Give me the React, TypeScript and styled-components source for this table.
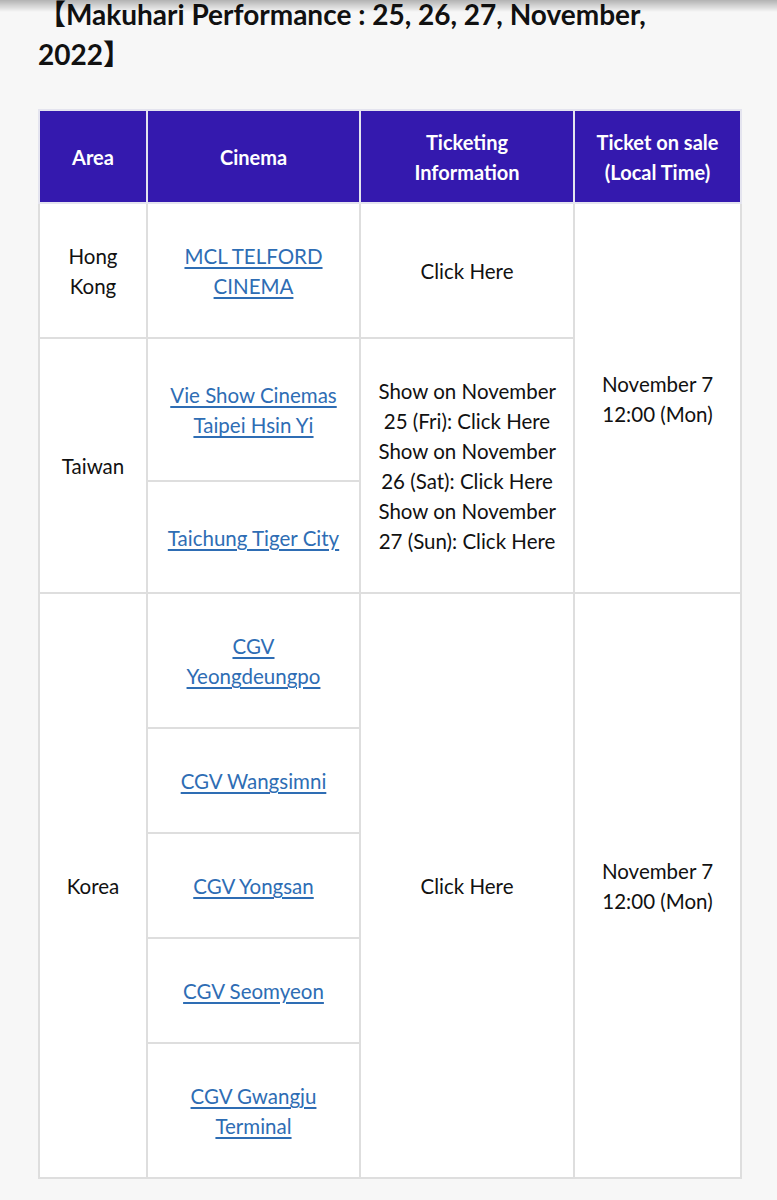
import styled, { createGlobalStyle } from "styled-components";

const GlobalStyle = createGlobalStyle`
  html, body {
    margin: 0;
    padding: 0;
    background: #f7f7f7;
  }
  body {
    font-family: Lato, "Noto Sans CJK JP", sans-serif;
    color: #111;
  }
`;

const TopShade = styled.div`
  position: fixed;
  top: 0;
  left: 0;
  right: 0;
  height: 12px;
  background: linear-gradient(to bottom, rgba(0, 0, 0, 0.28), rgba(0, 0, 0, 0));
  pointer-events: none;
`;

const Page = styled.div`
  padding: 0 37px 20px 38px;
`;

const Heading = styled.h2`
  max-width: 650px;
  margin: -6px 0 35px;
  font-size: 28px;
  font-weight: 700;
  line-height: 40px;
  color: #111;
`;

const Table = styled.table`
  width: 100%;
  border-collapse: collapse;
  table-layout: fixed;
  background: #fff;
  border: 2px solid #dedede;
`;

const Th = styled.th`
  background: #3419ae;
  color: #fff;
  font-weight: 700;
  font-size: 20px;
  line-height: 30px;
  padding: 16px 12px 15px;
  border: 2px solid #e4e4ef;
  text-align: center;
  vertical-align: middle;
`;

const Td = styled.td`
  font-size: 20.5px;
  line-height: 30px;
  padding: 37px 17px 36px;
  border: 2px solid #dedede;
  text-align: center;
  vertical-align: middle;
`;

const CinemaLink = styled.a`
  color: #2e6db4;
  text-decoration: underline;
  text-decoration-thickness: 2px;
  text-underline-offset: 3px;
`;

const Show = styled.span`
  display: block;
`;

const Lines = styled.span`
  white-space: pre-line;
`;

const Time = "November 7\n12:00 (Mon)";

const shows = ["25 (Fri)", "26 (Sat)", "27 (Sun)"];

export default function App() {
  return (
    <>
      <GlobalStyle />
      <TopShade />
      <Page>
        <Heading>【Makuhari Performance : 25, 26, 27, November, 2022】</Heading>
        <Table>
          <colgroup>
            <col style={{ width: 108 }} />
            <col style={{ width: 213 }} />
            <col style={{ width: 214 }} />
            <col style={{ width: 167 }} />
          </colgroup>
          <thead>
            <tr>
              <Th>Area</Th>
              <Th>Cinema</Th>
              <Th>Ticketing Information</Th>
              <Th>Ticket on sale (Local Time)</Th>
            </tr>
          </thead>
          <tbody>
            <tr>
              <Td>Hong Kong</Td>
              <Td>
                <CinemaLink href="#">MCL TELFORD CINEMA</CinemaLink>
              </Td>
              <Td>Click Here</Td>
              <Td rowSpan={3}>
                <Lines>{Time}</Lines>
              </Td>
            </tr>
            <tr>
              <Td rowSpan={2}>Taiwan</Td>
              <Td>
                <CinemaLink href="#">Vie Show Cinemas Taipei Hsin Yi</CinemaLink>
              </Td>
              <Td rowSpan={2}>
                {shows.map((s) => (
                  <Show key={s}>Show on November {s}: Click Here</Show>
                ))}
              </Td>
            </tr>
            <tr>
              <Td>
                <CinemaLink href="#">Taichung Tiger City</CinemaLink>
              </Td>
            </tr>
            <tr>
              <Td rowSpan={5}>Korea</Td>
              <Td>
                <CinemaLink href="#">CGV Yeongdeungpo</CinemaLink>
              </Td>
              <Td rowSpan={5}>Click Here</Td>
              <Td rowSpan={5}>
                <Lines>{Time}</Lines>
              </Td>
            </tr>
            <tr>
              <Td>
                <CinemaLink href="#">CGV Wangsimni</CinemaLink>
              </Td>
            </tr>
            <tr>
              <Td>
                <CinemaLink href="#">CGV Yongsan</CinemaLink>
              </Td>
            </tr>
            <tr>
              <Td>
                <CinemaLink href="#">CGV Seomyeon</CinemaLink>
              </Td>
            </tr>
            <tr>
              <Td>
                <CinemaLink href="#">CGV Gwangju Terminal</CinemaLink>
              </Td>
            </tr>
          </tbody>
        </Table>
      </Page>
    </>
  );
}
